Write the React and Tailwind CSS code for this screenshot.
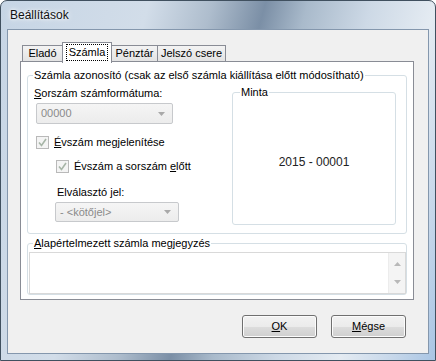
import React from "react";

const Arrow = ({ color = "#a9a9a9" }) => (
  <svg width="7" height="4" viewBox="0 0 7 4">
    <path d="M0 0h7L3.5 4z" fill={color} />
  </svg>
);

function Combo({ size, text }) {
  return (
    <div
      className={`${size} flex items-center justify-between rounded-[2px] border border-[#c7c9cc] bg-[linear-gradient(#f5f5f5,#ececec)] pl-[4px] pr-[7px] text-[#8a8a8a]`}
    >
      <span>{text}</span>
      <Arrow />
    </div>
  );
}

function Check({ children, className }) {
  return (
    <div className={`flex h-[13px] items-center ${className}`}>
      <div className="flex h-[13px] w-[13px] items-center justify-center border border-[#b9b9b9] bg-[#f4f4f4]">
        <svg width="9" height="9" viewBox="0 0 9 9">
          <path d="M1 4.5 L3.5 7.5 L8 1" fill="none" stroke="#a7b5a7" strokeWidth="1.6" />
        </svg>
      </div>
      <span className="ml-[5px] leading-[13px]">{children}</span>
    </div>
  );
}

function Button({ children }) {
  return (
    <div className="flex h-[23px] w-[75px] items-center justify-center rounded-[3px] border border-[#707070] bg-[linear-gradient(#f2f2f2_0%,#ebebeb_50%,#dddddd_51%,#cfcfcf_100%)] shadow-[inset_0_0_0_1px_#fcfcfc]">
      {children}
    </div>
  );
}

export default function App() {
  return (
    <div className="h-[361px] w-[436px] overflow-hidden bg-white font-['Liberation_Sans',Arial,sans-serif] text-[11px] text-black">
      <div className="flex h-[361px] w-[436px] flex-col rounded-t-[7px] border border-[#40505f] bg-[linear-gradient(105deg,#c6d5e5_0%,#d2dde9_28%,#aebdcd_40%,#7b8fa6_50%,#a9bacb_58%,#cdd9e6_70%,#e4ebf2_82%,#c6d7ea_92%,#a9c5e4_100%)]">
        <div className="flex h-[28px] items-center pl-[9px] text-[12px] text-[#111] [text-shadow:0_0_6px_#ffffff,0_0_3px_#ffffff]">
          Beállítások
        </div>
        <div className="mx-[6px] flex h-[325px] flex-col border border-[#8497ad] bg-[#f0f0f0]">
          <div className="pl-[12px] pt-[12px]">
            <div className="flex h-[19px] items-end pl-[2px]">
              <div className="flex h-[16px] w-[41px] items-center justify-center border border-b-0 border-[#898c95] bg-[linear-gradient(#f3f3f3,#e3e3e3)]">
                Eladó
              </div>
              <div className="relative z-10 -mb-[2px] -ml-px flex h-[21px] w-[50px] items-start justify-center border border-b-0 border-[#898c95] bg-white pt-[1px]">
                <span className="flex h-[17px] items-center border border-dotted border-black px-[2px]">Számla</span>
              </div>
              <div className="-ml-px flex h-[16px] w-[47px] items-center justify-center border border-b-0 border-[#898c95] bg-[linear-gradient(#f3f3f3,#e3e3e3)]">
                Pénztár
              </div>
              <div className="-ml-px flex h-[16px] w-[69px] items-center justify-center border border-b-0 border-[#898c95] bg-[linear-gradient(#f3f3f3,#e3e3e3)]">
                Jelszó csere
              </div>
            </div>
            <div className="flex h-[239px] w-[394px] flex-col border border-[#898c95] bg-white">
              <fieldset className="ml-[6px] mt-[7px] h-[165px] w-[380px] rounded-[3px] border border-[#d5dfe5]">
                <legend className="ml-[5px] px-[1px] leading-[13px]">
                  Számla azonosító (csak az első számla kiállítása előtt módosítható)
                </legend>
                <div className="flex items-start">
                  <div className="flex flex-col pl-[6px]">
                    <div className="mt-[5px] leading-[13px]">
                      <span className="underline">S</span>orszám számformátuma:
                    </div>
                    <div className="ml-[2px] mt-[3px]">
                      <Combo size="h-[21px] w-[137px]" text="00000" />
                    </div>
                    <Check className="ml-[2px] mt-[12px]">
                      <span className="underline">É</span>vszám megjelenítése
                    </Check>
                    <Check className="ml-[22px] mt-[11px]">
                      Évszám a sorszám <span className="underline">e</span>lőtt
                    </Check>
                    <div className="ml-[23px] mt-[13px] leading-[13px]">
                      Elválasztó <span className="underline">j</span>el:
                    </div>
                    <div className="ml-[21px] mt-[3px]">
                      <Combo size="h-[20px] w-[124px]" text="- <kötőjel>" />
                    </div>
                  </div>
                  <fieldset className="ml-auto mr-[10px] mt-[4px] flex h-[139px] w-[164px] flex-col rounded-[3px] border border-[#d5dfe5]">
                    <legend className="ml-[7px] px-[1px] leading-[13px]">Minta</legend>
                    <div className="flex h-[124px] items-center justify-center pt-[2px] text-[12px] text-[#222]">
                      2015 - 00001
                    </div>
                  </fieldset>
                </div>
              </fieldset>
              <fieldset className="ml-[6px] mt-[3px] h-[58px] w-[380px] rounded-[3px] border border-[#d5dfe5]">
                <legend className="ml-[5px] px-[1px] leading-[13px]">
                  <span className="underline">A</span>lapértelmezett számla megjegyzés
                </legend>
                <div className="ml-px mt-[2px] flex h-[42px] w-[377px] border border-[#d9d9d9] bg-white">
                  <div className="flex-1" />
                  <div className="flex w-[17px] flex-col items-center justify-between border-l border-[#ececec] bg-[#f4f4f4] py-[9px]">
                    <svg width="7" height="4" viewBox="0 0 7 4">
                      <path d="M0 4h7L3.5 0z" fill="#b8b8b8" />
                    </svg>
                    <Arrow color="#b8b8b8" />
                  </div>
                </div>
              </fieldset>
            </div>
          </div>
          <div className="mt-[15px] flex justify-end gap-[14px] pr-[22px]">
            <Button>
              <span className="underline">O</span>K
            </Button>
            <Button>
              <span className="underline">M</span>égse
            </Button>
          </div>
        </div>
      </div>
    </div>
  );
}
